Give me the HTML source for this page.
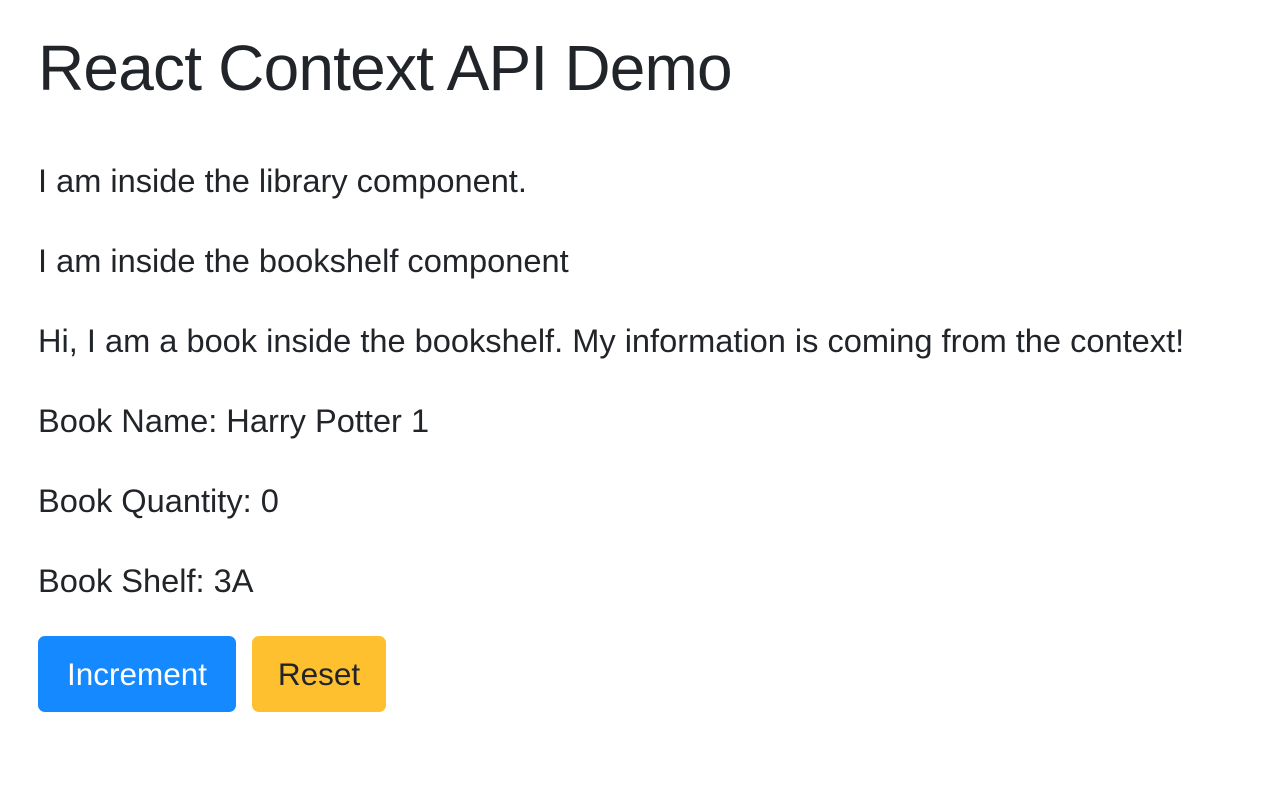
<!DOCTYPE html>
<html><head><meta charset="utf-8"><style>
html,body{margin:0;padding:0;background:#fff;}
body{width:1286px;height:762px;overflow:hidden;font-family:"Liberation Sans",Arial,sans-serif;color:#212529;}
.c{padding-left:38px;}
h1{font-size:64px;font-weight:400;line-height:76px;margin:30px 0 0 0;letter-spacing:-0.8px;}
p{font-size:32.6px;line-height:48px;margin:0;position:absolute;left:38px;}
.btn{position:absolute;top:636px;height:76px;border-radius:7px;font-size:31.5px;line-height:77px;text-align:center;}
</style></head><body>
<div class="c"><h1>React Context API Demo</h1></div>
<p style="top:157px">I am inside the library component.</p>
<p style="top:237px">I am inside the bookshelf component</p>
<p style="top:317px">Hi, I am a book inside the bookshelf. My information is coming from the context!</p>
<p style="top:397px">Book Name: Harry Potter 1</p>
<p style="top:477px">Book Quantity: 0</p>
<p style="top:557px">Book Shelf: 3A</p>
<div class="btn" style="left:38px;width:198px;background:#1589ff;color:#fff;">Increment</div>
<div class="btn" style="left:252px;width:134px;background:#fec02f;color:#212529;">Reset</div>
</body></html>
